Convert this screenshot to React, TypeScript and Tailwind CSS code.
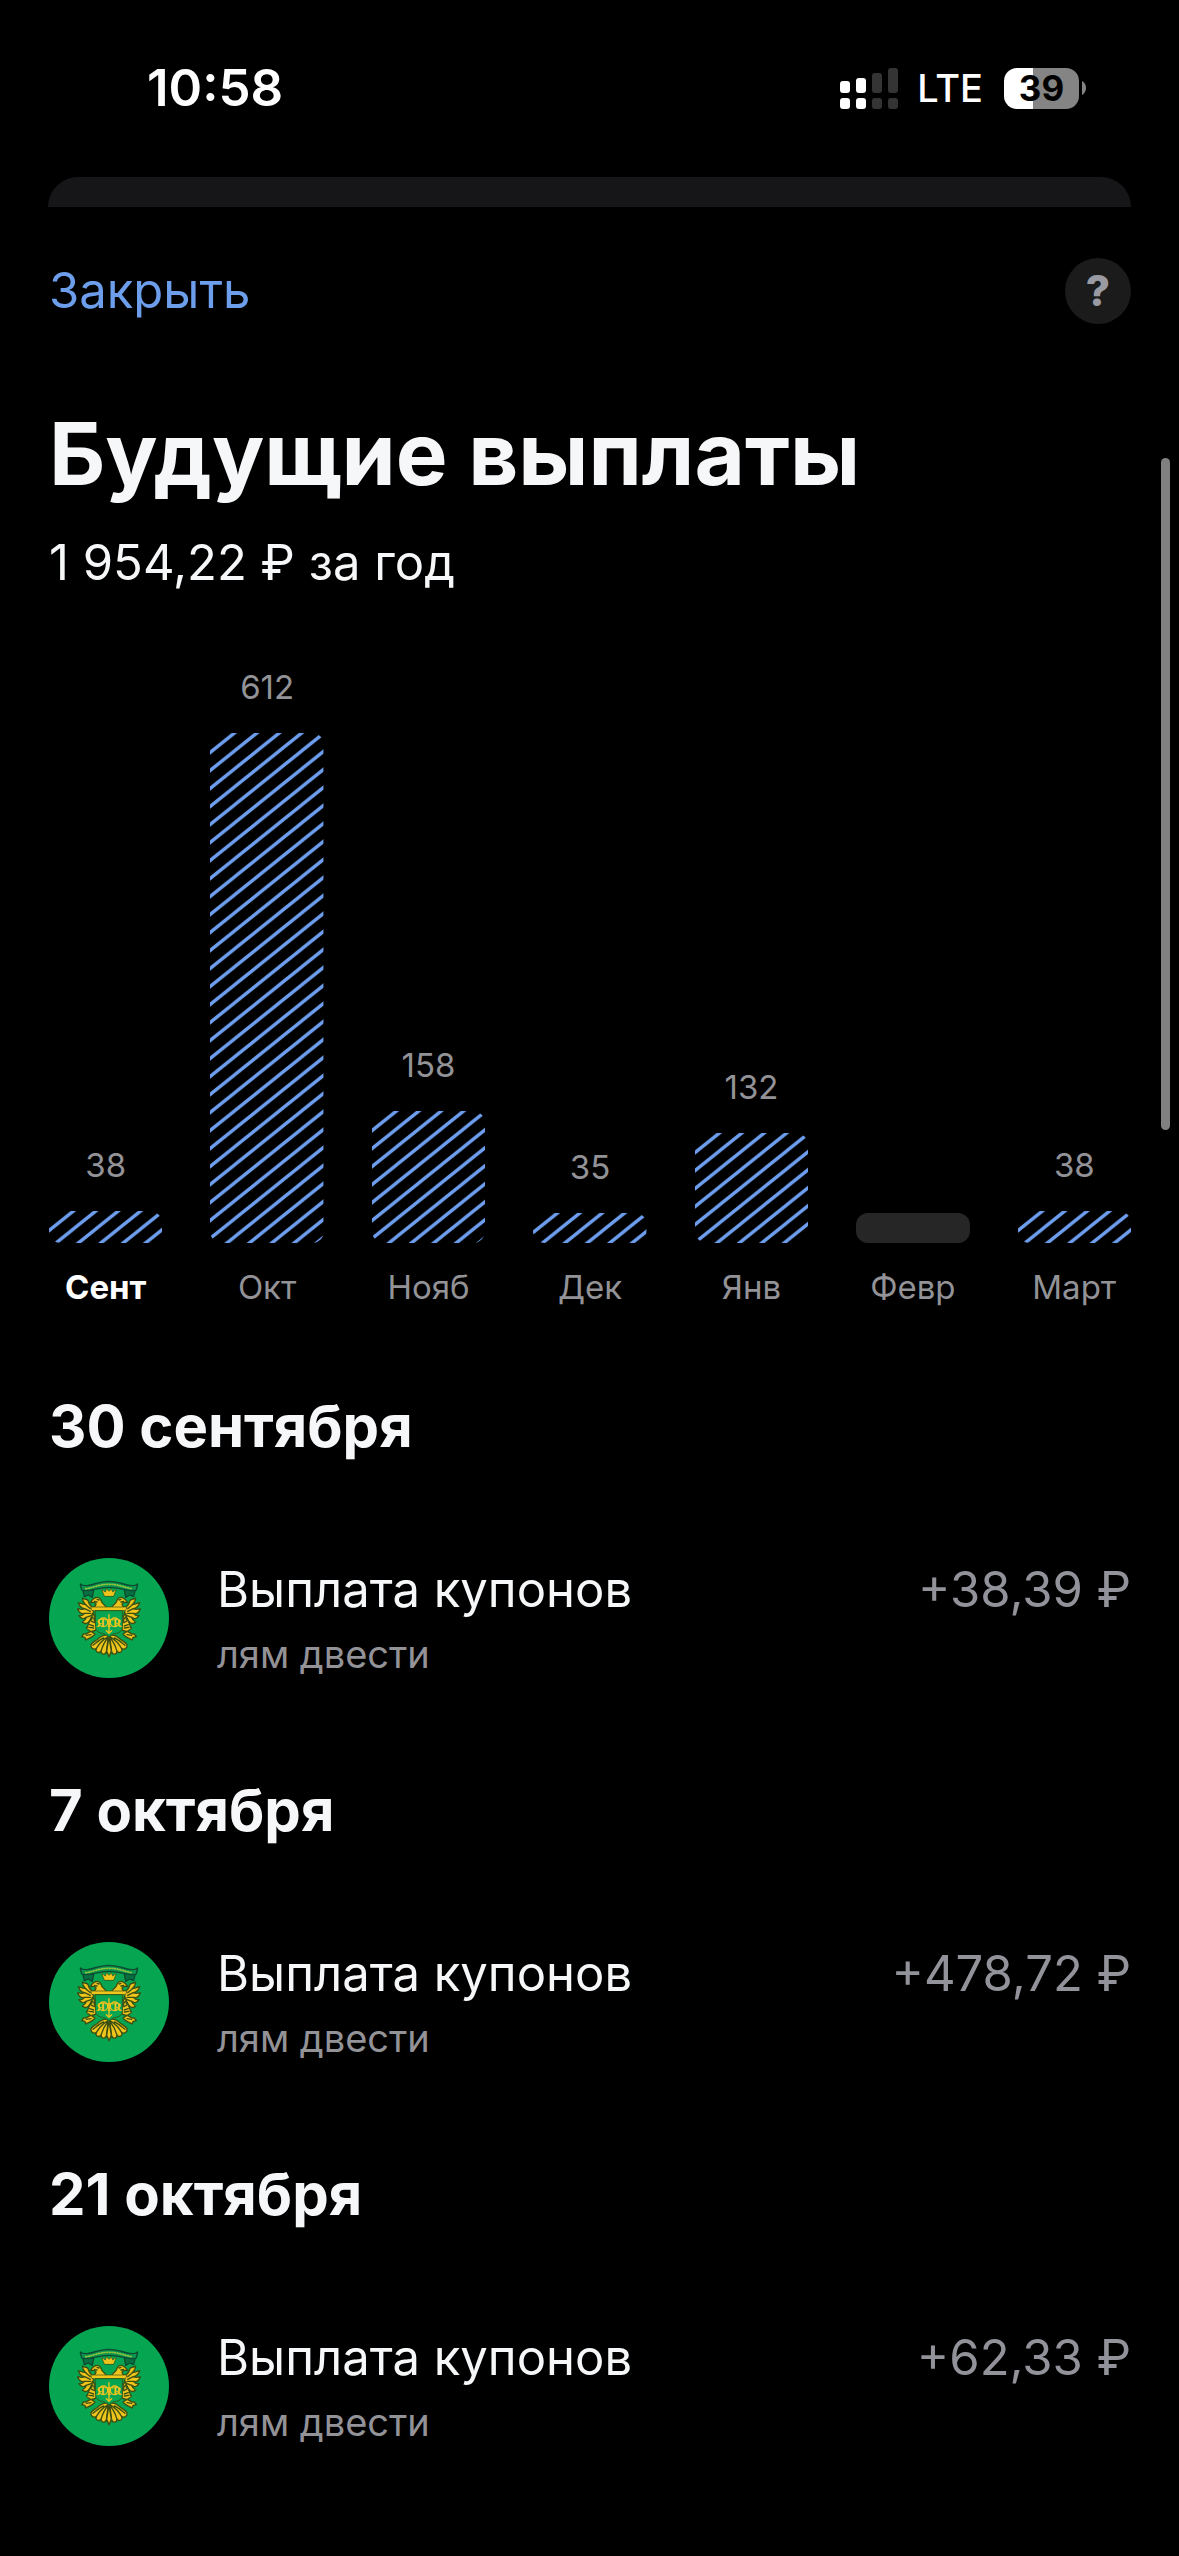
import React, { useId } from 'react';

interface MonthBar {
  label: string;
  value: number;
  height: number;
}

interface Payout {
  title: string;
  source: string;
  amount: string;
}

interface PayoutDay {
  date: string;
  payouts: Payout[];
}

const MONTHS: MonthBar[] = [
  { label: 'Сент', value: 38, height: 32 },
  { label: 'Окт', value: 612, height: 510 },
  { label: 'Нояб', value: 158, height: 132 },
  { label: 'Дек', value: 35, height: 30 },
  { label: 'Янв', value: 132, height: 110 },
  { label: 'Февр', value: 0, height: 30 },
  { label: 'Март', value: 38, height: 32 },
];

const DAYS: PayoutDay[] = [
  { date: '30 сентября', payouts: [{ title: 'Выплата купонов', source: 'лям двести', amount: '+38,39 ₽' }] },
  { date: '7 октября', payouts: [{ title: 'Выплата купонов', source: 'лям двести', amount: '+478,72 ₽' }] },
  { date: '21 октября', payouts: [{ title: 'Выплата купонов', source: 'лям двести', amount: '+62,33 ₽' }] },
  { date: '28 октября', payouts: [] },
];

const SignalIcon = () => (
  <svg width="58" height="41" viewBox="0 0 58 41" aria-hidden="true">
    <g fill="#fff">
      <rect x="0" y="13" width="10" height="12" rx="3" />
      <rect x="16" y="10" width="10" height="15" rx="3" />
      <rect x="0" y="30" width="10" height="11" rx="3" />
      <rect x="16" y="30" width="10" height="11" rx="3" />
    </g>
    <g fill="#343434">
      <rect x="32" y="5" width="10" height="20" rx="3" />
      <rect x="48" y="0" width="10" height="25" rx="3" />
      <rect x="32" y="30" width="10" height="11" rx="3" />
      <rect x="48" y="30" width="10" height="11" rx="3" />
    </g>
  </svg>
);

const StatusBar = () => (
  <div className="flex h-[177px] shrink-0 items-start justify-between pl-[147px] pr-[93px] pt-[56px] text-white">
    <span className="text-[51px] font-semibold leading-[64px]">10:58</span>
    <div className="flex h-[64px] items-center">
      <SignalIcon />
      <span className="ml-[19px] text-[38px] font-medium leading-[64px]">LTE</span>
      <div className="ml-[21px] flex h-[41px] w-[75px] items-center justify-center rounded-[13px] bg-linear-to-r from-white from-39% to-[#848484] to-39% text-[35px] font-bold leading-none text-black">
        39
      </div>
      <svg className="ml-[3px]" width="4" height="14" viewBox="0 0 4 14" aria-hidden="true">
        <path d="M0 0C2.6 1.4 4 4 4 7s-1.4 5.6-4 7z" fill="#848484" />
      </svg>
    </div>
  </div>
);

const Stripes = () => {
  const id = useId();
  return (
    <svg className="block h-full w-full" aria-hidden="true">
      <defs>
        <pattern id={id} x="2" y="0" width="22.4" height="18" patternUnits="userSpaceOnUse">
          <path d="M-22.4 18L22.4 -18M-22.4 36L44.8 -18M0 36L44.8 0" stroke="#6d9ded" strokeWidth="3.4" />
        </pattern>
      </defs>
      <rect width="100%" height="100%" fill={`url(#${id})`} />
    </svg>
  );
};

const Chart = () => (
  <div className="mt-[72px] grid grid-cols-7 items-end gap-12">
    {MONTHS.map((month, index) => (
      <div key={month.label} className="flex flex-col items-center text-[33px] leading-[40px] text-[#929297]">
        {month.value > 0 && <span className="mb-[26px]">{month.value}</span>}
        <div
          className={`w-full overflow-hidden rounded-[12px] ${month.value > 0 ? '' : 'bg-[#262626]'}`}
          style={{ height: month.height }}
        >
          {month.value > 0 && <Stripes />}
        </div>
        <span className={`mt-[24px] ${index === 0 ? 'font-bold text-white' : ''}`}>{month.label}</span>
      </div>
    ))}
  </div>
);

// one half of the eagle, mirrored for the other side
const EagleHalf = () => (
  <g>
    {/* neck and head */}
    <path d="M100 96C98 86 90 86 86 78C84 68 76 62 68 65C60 68 56 72 52 80C60 78 64 78 68 82C72 90 62 92 58 97Z" />
    <path d="M72 70l6 2M64 76l8 2" fill="none" />
    {/* wing feathers */}
    <path d="M58 94C50 88 46 80 44 72C38 68 30 70 28 66C28 76 34 82 38 86C30 86 22 82 16 80C20 92 28 97 35 98C28 102 20 100 14 98C18 110 27 114 35 112C30 118 24 120 18 119C24 130 34 130 40 124C38 132 32 136 28 138C36 146 46 142 50 134C52 128 58 120 62 112Z" />
    <path d="M38 86L52 98M35 98L52 106M35 112L53 112M40 124L56 118" fill="none" />
    {/* leg and plumage */}
    <path d="M58 112C64 118 68 126 64 134C70 142 72 152 70 160C66 166 58 164 54 168C50 162 44 162 40 156C46 154 44 146 48 140C50 134 54 134 56 130Z" />
    <path d="M50 146l12 4M48 154l14 2M58 124l6 6M56 136l8 4" fill="none" />
    {/* claw and sceptre */}
    <path d="M54 166C46 168 42 176 32 174L26 182L36 184L38 192C46 188 54 186 60 180L66 174Z" />
    <path d="M40 178l14-2" fill="none" />
    {/* tail */}
    <path d="M104 178C92 176 82 182 74 190C66 196 60 196 54 206C52 214 60 222 70 218C66 226 76 234 84 226C84 236 96 238 100 228L108 240Z" />
    <path d="M102 184C92 190 80 200 70 218M104 186C94 198 88 212 84 226M106 188C102 204 102 216 100 228M92 186C80 190 68 202 60 208" fill="none" />
  </g>
);

const Emblem = () => (
  <svg className="size-[120px] shrink-0" viewBox="0 0 360 360" aria-hidden="true">
    <circle cx="180" cy="180" r="180" fill="#05a551" />
    <g transform="translate(72 54)" strokeLinejoin="round" strokeLinecap="round">
      {/* ribbon */}
      <g fill="#067043" stroke="#0a4a30" strokeWidth="4">
        <path d="M28 36L34 62L46 57L58 64L62 42Z" />
        <path d="M188 36L182 62L170 57L158 64L154 42Z" />
        <path d="M22 24C40 38 66 18 108 16C150 18 176 38 194 24L190 42C170 50 146 34 108 34C70 34 46 50 26 42Z" fill="#0a9450" />
      </g>
      <path d="M38 38C60 36 76 25 108 25C140 25 156 36 178 38" fill="none" stroke="#8fc43a" strokeWidth="5" strokeDasharray="3 5" />
      <g fill="#efc41c" stroke="#3c4f12" strokeWidth="4">
        <EagleHalf />
        <g transform="translate(216 0) scale(-1 1)">
          <EagleHalf />
        </g>
        <path d="M54 93L162 93L158 104L58 104Z" strokeWidth="2" />
        {/* crown */}
        <path d="M94 60L86 40L97 48L101 38L108 46L115 38L119 48L130 40L122 60Z" strokeWidth="2" />
        <path d="M101 226L108 182L115 226L108 242Z" />
      </g>
      {/* shield */}
      <path d="M68 104H148V156C148 168 132 172 122 174L108 182L94 174C84 172 68 168 68 156Z" fill="#05a551" stroke="#2f5c1c" strokeWidth="3" />
      <g fill="none" stroke="#efc41c" strokeWidth="4">
        <circle cx="91" cy="139" r="13" />
        <circle cx="125" cy="139" r="13" />
        <path d="M108 116V172M100 164L108 172L116 164" />
      </g>
      <text x="108" y="152" fill="#efc41c" fontFamily="Liberation Serif, serif" fontSize="36" fontWeight="700" textAnchor="middle">
        ЯTR
      </text>
    </g>
  </svg>
);

const PayoutRow: React.FC<{ payout: Payout }> = ({ payout }) => (
  <div className="mb-[88px] mt-[96px] flex items-start">
    <Emblem />
    <div className="ml-12 flex-1">
      <p className="text-[49px] leading-[64px] text-[#f6f7f8]">{payout.title}</p>
      <p className="text-[38px] leading-[64px] text-[#929297]">{payout.source}</p>
    </div>
    <p className="text-[49px] leading-[64px] text-[#92929a]">{payout.amount}</p>
  </div>
);

const App: React.FC = () => {
  return (
    <div className="relative flex h-screen flex-col overflow-hidden bg-black font-['Inter','Liberation_Sans',sans-serif]">
      <StatusBar />
      <div className="mx-12 h-[30px] shrink-0 rounded-t-[30px] bg-[#161618]" />

      <main className="flex flex-col pl-[49px] pr-12 pt-[51px]">
        <header className="flex items-center justify-between">
          <button type="button" className="text-[49px] leading-[66px] text-[#6d9eeb]">
            Закрыть
          </button>
          <button
            type="button"
            aria-label="Справка"
            className="flex size-[66px] items-center justify-center rounded-full bg-[#1b1b1c] text-[42px] font-extrabold leading-none text-[#9a9aa2]"
          >
            ?
          </button>
        </header>

        <h1 className="mt-[77px] text-[87px] font-bold leading-[106px] text-[#f6f7f8]">Будущие выплаты</h1>
        <p className="mt-[24px] text-[49px] leading-[64px] text-[#f6f7f8]">1 954,22 ₽ за год</p>

        <Chart />

        <div className="mt-[83px]">
          {DAYS.map((day) => (
            <section key={day.date}>
              <h2 className="text-[58px] font-bold leading-[72px] text-[#f6f7f8]">{day.date}</h2>
              {day.payouts.map((payout) => (
                <PayoutRow key={payout.amount} payout={payout} />
              ))}
            </section>
          ))}
        </div>
      </main>

      <div className="absolute right-[9px] top-[458px] h-[672px] w-[9px] rounded-full bg-[#808080]" />
    </div>
  );
};

export default App;
